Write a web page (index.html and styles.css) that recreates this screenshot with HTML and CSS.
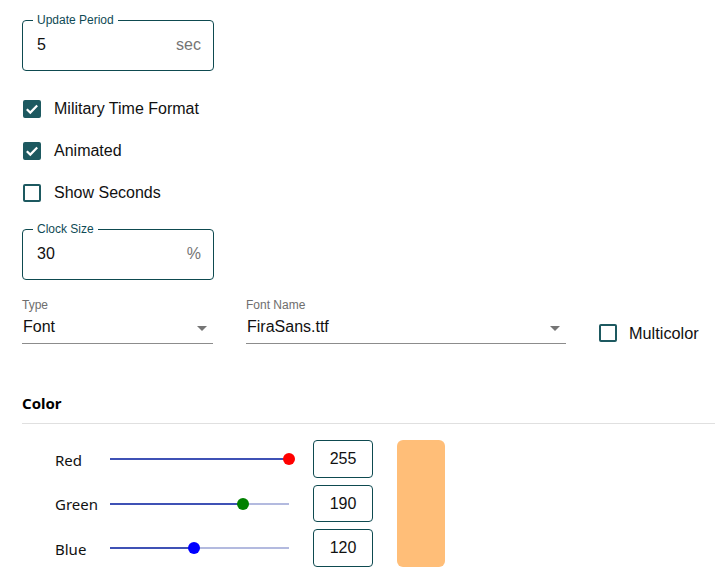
FILE: index.html
```html
<!DOCTYPE html>
<html>
<head>
<meta charset="utf-8">
<link rel="stylesheet" href="styles.css">
</head>
<body>
<div class="page">
  <fieldset class="outlined">
    <legend>Update Period</legend>
    <div class="field-row"><span class="value">5</span><span class="suffix">sec</span></div>
  </fieldset>

  <div class="checks">
    <label class="check-row"><span class="box checked"><svg viewBox="0 0 18 18" width="18" height="18"><polyline points="3.8,9.2 7.3,12.6 14.2,5.6" fill="none" stroke="#fff" stroke-width="2.2"/></svg></span><span class="check-text">Military Time Format</span></label>
    <label class="check-row"><span class="box checked"><svg viewBox="0 0 18 18" width="18" height="18"><polyline points="3.8,9.2 7.3,12.6 14.2,5.6" fill="none" stroke="#fff" stroke-width="2.2"/></svg></span><span class="check-text">Animated</span></label>
    <label class="check-row"><span class="box"></span><span class="check-text">Show Seconds</span></label>
  </div>

  <fieldset class="outlined size-field">
    <legend>Clock Size</legend>
    <div class="field-row"><span class="value">30</span><span class="suffix">%</span></div>
  </fieldset>

  <div class="select-row">
    <div class="select type-select">
      <div class="select-label">Type</div>
      <div class="select-value"><span>Font</span><span class="arrow"></span></div>
    </div>
    <div class="select font-select">
      <div class="select-label">Font Name</div>
      <div class="select-value"><span>FiraSans.ttf</span><span class="arrow"></span></div>
    </div>
    <label class="check-row multi"><span class="box"></span><span class="check-text">Multicolor</span></label>
  </div>

  <h3 class="section-title">Color</h3>
  <div class="divider"></div>

  <div class="color-area">
    <div class="sliders">
      <div class="slider-row">
        <span class="channel">Red</span>
        <div class="slider"><div class="rail"></div><div class="track" style="width:100%"></div><div class="thumb red" style="left:100%"></div></div>
        <div class="num">255</div>
      </div>
      <div class="slider-row">
        <span class="channel">Green</span>
        <div class="slider"><div class="rail"></div><div class="track" style="width:74.5%"></div><div class="thumb green" style="left:74.5%"></div></div>
        <div class="num">190</div>
      </div>
      <div class="slider-row">
        <span class="channel">Blue</span>
        <div class="slider"><div class="rail"></div><div class="track" style="width:47.1%"></div><div class="thumb blue" style="left:47.1%"></div></div>
        <div class="num">120</div>
      </div>
    </div>
    <div class="swatch" style="background:rgb(255,190,120)"></div>
  </div>
</div>
</body>
</html>
```

FILE: styles.css
```css
* { box-sizing: border-box; }
html, body { margin: 0; padding: 0; background: #fff; }
body {
  font-family: "Liberation Sans", Arial, sans-serif;
  color: #111;
}
.page {
  padding: 13px 0 0 22px;
  width: 727px;
}
.outlined {
  width: 192px;
  margin: 0;
  padding: 0 12px 7px 10px;
  border: 1px solid #0e4a50;
  border-radius: 4px;
  min-width: 0;
}
.outlined legend {
  font-size: 12px;
  line-height: 14px;
  padding: 0 4px;
  color: #0f4a55;
}
.field-row {
  height: 36px;
  display: flex;
  align-items: center;
  justify-content: space-between;
  padding-left: 4px;
  font-size: 16px;
}
.value { color: #111; }
.suffix { color: #757575; }

.checks {
  margin-top: 17px;
  display: flex;
  flex-direction: column;
}
.check-row {
  height: 42px;
  display: flex;
  align-items: center;
  font-size: 16px;
}
.box {
  width: 18px;
  height: 18px;
  margin-left: 1px;
  border: 2px solid #1d5960;
  border-radius: 2px;
  display: inline-block;
  position: relative;
  flex: none;
}
.box.checked {
  background: #1d5960;
}
.box svg {
  display: block;
  margin: -2px;
}
.check-text {
  margin-left: 13px;
  color: #111;
}
.size-field {
  margin-top: 8px;
}

.select-row {
  margin-top: 18px;
  display: flex;
  align-items: flex-start;
  gap: 33px;
}
.select-label {
  font-size: 12px;
  line-height: 14px;
  color: #6e6e6e;
}
.select-value {
  margin-top: 5px;
  height: 27px;
  padding-bottom: 6px;
  border-bottom: 1px solid #8c8c8c;
  display: flex;
  justify-content: space-between;
  align-items: center;
  font-size: 16px;
  line-height: 20px;
  padding-left: 1px;
  padding-right: 6px;
}
.arrow {
  width: 0;
  height: 0;
  border-left: 5px solid transparent;
  border-right: 5px solid transparent;
  border-top: 5px solid #757575;
  margin-top: 3px;
}
.type-select { width: 191px; }
.font-select { width: 320px; }
.check-row.multi {
  height: 18px;
  margin-top: 26px;
}
.check-row.multi .box { margin-left: 0; }
.check-row.multi .check-text { margin-left: 12px; font-size: 16.3px; }

.section-title {
  margin: 49px 0 0 0;
  font-family: "Noto Sans", "Open Sans", sans-serif;
  font-weight: 700;
  font-size: 15px;
  line-height: 20px;
  color: #000;
}
.divider {
  margin-top: 10px;
  width: 693px;
  height: 1px;
  background: #e0e0e0;
}
.color-area {
  margin-top: 16px;
  padding-left: 33px;
  display: flex;
  gap: 24px;
}
.sliders {
  display: flex;
  flex-direction: column;
  gap: 7px;
}
.slider-row {
  height: 38px;
  display: flex;
  align-items: center;
}
.slider-row:nth-child(2) { height: 37px; }
.channel {
  width: 55px;
  font-family: "Noto Sans", "Open Sans", sans-serif;
  font-size: 15px;
  color: #111;
  padding-top: 1px;
}
.slider {
  position: relative;
  width: 179px;
  height: 12px;
  margin-right: 24px;
}
.rail {
  position: absolute;
  left: 0; right: 0; top: 5px;
  height: 2px;
  background: #b3badf;
}
.track {
  position: absolute;
  left: 0; top: 5px;
  height: 2px;
  background: #3f51b5;
}
.thumb {
  position: absolute;
  top: 0;
  width: 12px;
  height: 12px;
  margin-left: -6px;
  border-radius: 50%;
}
.thumb.red { background: #ff0000; }
.thumb.green { background: #008000; }
.thumb.blue { background: #0000ff; }
.num {
  width: 60px;
  height: 100%;
  border: 1px solid #0e4a50;
  border-radius: 4px;
  display: flex;
  align-items: center;
  justify-content: center;
  font-size: 16px;
  color: #111;
}
.swatch {
  width: 48px;
  height: 127px;
  border-radius: 6px;
}
```
